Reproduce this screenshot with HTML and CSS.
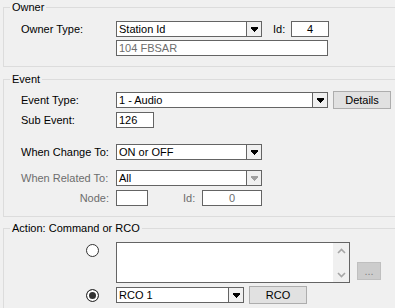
FILE: index.html
```html
<!DOCTYPE html>
<html lang="en">

<head>
    <meta charset="UTF-8">
    <meta name="viewport" content="width=device-width, initial-scale=1.0">
    <title>Event Trigger</title>
    <link rel="stylesheet" href="styles.css">
</head>

<body>
    <fieldset class="group group-owner">
        <legend>Owner</legend>
        <div class="body">
            <div class="row">
                <span class="lbl">Owner Type:</span>
                <div class="combo w146">
                    <span class="val">Station Id</span>
                    <span class="drop"><svg width="7" height="5" viewBox="0 0 7 5"><polygon points="0,0 7,0 7,1.5 4,5 3,5 0,1.5" /></svg></span>
                </div>
                <span class="lbl-id">Id:</span>
                <div class="box w38 center">4</div>
            </div>
            <div class="row gap3">
                <span class="lbl"></span>
                <div class="box w212 disabled">104 FBSAR</div>
            </div>
        </div>
    </fieldset>

    <fieldset class="group group-event">
        <legend>Event</legend>
        <div class="body">
            <div class="row tall">
                <span class="lbl">Event Type:</span>
                <div class="combo w212">
                    <span class="val">1 - Audio</span>
                    <span class="drop"><svg width="7" height="5" viewBox="0 0 7 5"><polygon points="0,0 7,0 7,1.5 4,5 3,5 0,1.5" /></svg></span>
                </div>
                <div class="btn ml5">Details</div>
            </div>
            <div class="row gap3">
                <span class="lbl">Sub Event:</span>
                <div class="box w38">126</div>
            </div>
            <div class="row gap16">
                <span class="lbl">When Change To:</span>
                <div class="combo w146">
                    <span class="val">ON or OFF</span>
                    <span class="drop"><svg width="7" height="5" viewBox="0 0 7 5"><polygon points="0,0 7,0 7,1.5 4,5 3,5 0,1.5" /></svg></span>
                </div>
            </div>
            <div class="row gap10 off">
                <span class="lbl">When Related To:</span>
                <div class="combo w146">
                    <span class="val">All</span>
                    <span class="drop"><svg width="7" height="5" viewBox="0 0 7 5"><polygon points="0,0 7,0 7,1.5 4,5 3,5 0,1.5" /></svg></span>
                </div>
            </div>
            <div class="row gap4 off">
                <span class="lbl right">Node:</span>
                <div class="box w32"></div>
                <span class="lbl-node-id">Id:</span>
                <div class="box w60 center disabled">0</div>
            </div>
        </div>
    </fieldset>

    <fieldset class="group group-action">
        <legend>Action: Command or RCO</legend>
        <div class="body">
            <div class="row-top">
                <span class="radio-col"><span class="radio"></span></span>
                <div class="memo">
                    <div class="scroll">
                        <svg width="9" height="6" viewBox="0 0 9 6"><polyline points="1,5 4.5,1.5 8,5" /></svg>
                        <svg width="9" height="6" viewBox="0 0 9 6"><polyline points="1,1 4.5,4.5 8,1" /></svg>
                    </div>
                </div>
                <div class="btn small off-btn">...</div>
            </div>
            <div class="row tall gap3">
                <span class="radio-col"><span class="radio checked"></span></span>
                <div class="combo w128">
                    <span class="val">RCO 1</span>
                    <span class="drop"><svg width="7" height="5" viewBox="0 0 7 5"><polygon points="0,0 7,0 7,1.5 4,5 3,5 0,1.5" /></svg></span>
                </div>
                <div class="btn ml5">RCO</div>
            </div>
        </div>
    </fieldset>
</body>

</html>
```

FILE: styles.css
```css
* {
    box-sizing: border-box;
}

html,
body {
    overflow: hidden;
}

body {
    margin: 0;
    background-color: #f0f0f0;
    font-family: "Liberation Sans", Arial, sans-serif;
    font-size: 11px;
    color: #000;
}

/* group boxes, open on the right like the clipped dialog */
.group {
    margin: 0 0 0 3px;
    padding: 0;
    min-width: 0;
    border: 1px solid #dcdcdc;
    border-right: none;
}

.group legend {
    margin-left: 6px;
    padding: 0 2px;
    height: 13px;
    line-height: 13px;
}

.group .body {
    padding: 7px 0 10px 17px;
}

.group-owner {
    margin-top: 1px;
}

.group-event {
    margin-top: 6px;
}

.group-event .body {
    padding-top: 5px;
}

.group-action {
    margin-top: 5px;
}

/* rows */
.row {
    display: flex;
    align-items: center;
    height: 16px;
}

.row.tall {
    height: 18px;
}

.gap3 {
    margin-top: 3px;
}

.gap4 {
    margin-top: 4px;
}

.gap10 {
    margin-top: 10px;
}

.gap16 {
    margin-top: 16px;
}

.row-top {
    display: flex;
    align-items: flex-start;
}

.lbl {
    width: 95px;
    flex: none;
    white-space: nowrap;
}

.lbl.right {
    text-align: right;
    padding-right: 7px;
}

.lbl-id {
    width: 18px;
    margin-left: 11px;
}

.lbl-node-id {
    width: 19px;
    margin-left: 35px;
}

.off .lbl,
.off .lbl-node-id {
    color: #6d6d6d;
}

/* inputs */
.box,
.combo {
    height: 16px;
    border: 1px solid #646464;
    background-color: #fff;
    line-height: 14px;
    flex: none;
}

.box {
    padding-left: 2px;
}

.box.center {
    text-align: center;
    padding-left: 0;
}

.box.disabled {
    color: #6d6d6d;
}

.combo {
    display: flex;
}

.combo .val {
    flex: 1;
    padding-left: 2px;
}

.combo .drop {
    width: 15px;
    border-left: 1px solid #646464;
    background-color: #f0f0f0;
    display: flex;
    align-items: center;
    justify-content: center;
}

.combo .drop svg {
    fill: #000;
    shape-rendering: crispEdges;
}

.off .combo .drop svg {
    fill: #a0a0a0;
}

.w32 {
    width: 32px;
}

.w38 {
    width: 38px;
}

.w60 {
    width: 60px;
}

.w128 {
    width: 128px;
}

.w146 {
    width: 146px;
}

.w212 {
    width: 212px;
}

/* buttons */
.btn {
    width: 58px;
    height: 18px;
    border: 1px solid #adadad;
    background-color: #e1e1e1;
    text-align: center;
    line-height: 16px;
    flex: none;
}

.ml5 {
    margin-left: 5px;
}

.btn.small {
    width: 24px;
    margin-top: 20px;
    margin-left: 7px;
}

.off-btn {
    background-color: #cccccc;
    border-color: #bfbfbf;
    color: #838383;
}

/* radio */
.radio-col {
    width: 95px;
    flex: none;
    display: flex;
    justify-content: flex-end;
    padding-right: 17px;
}

.row-top .radio-col {
    padding-top: 2px;
}

.radio {
    width: 13px;
    height: 13px;
    border: 1px solid #333;
    border-radius: 50%;
    background-color: #fff;
}

.radio.checked {
    background-color: #333;
    box-shadow: inset 0 0 0 2px #fff;
}

/* memo */
.memo {
    width: 234px;
    height: 41px;
    border: 1px solid #646464;
    background-color: #fff;
    display: flex;
    justify-content: flex-end;
    flex: none;
}

.scroll {
    width: 16px;
    background-color: #f0f0f0;
    display: flex;
    flex-direction: column;
    justify-content: space-between;
    align-items: center;
    padding: 5px 0 4px;
}

.scroll svg {
    fill: none;
    stroke: #a6a6a6;
    stroke-width: 1.6;
}
```
